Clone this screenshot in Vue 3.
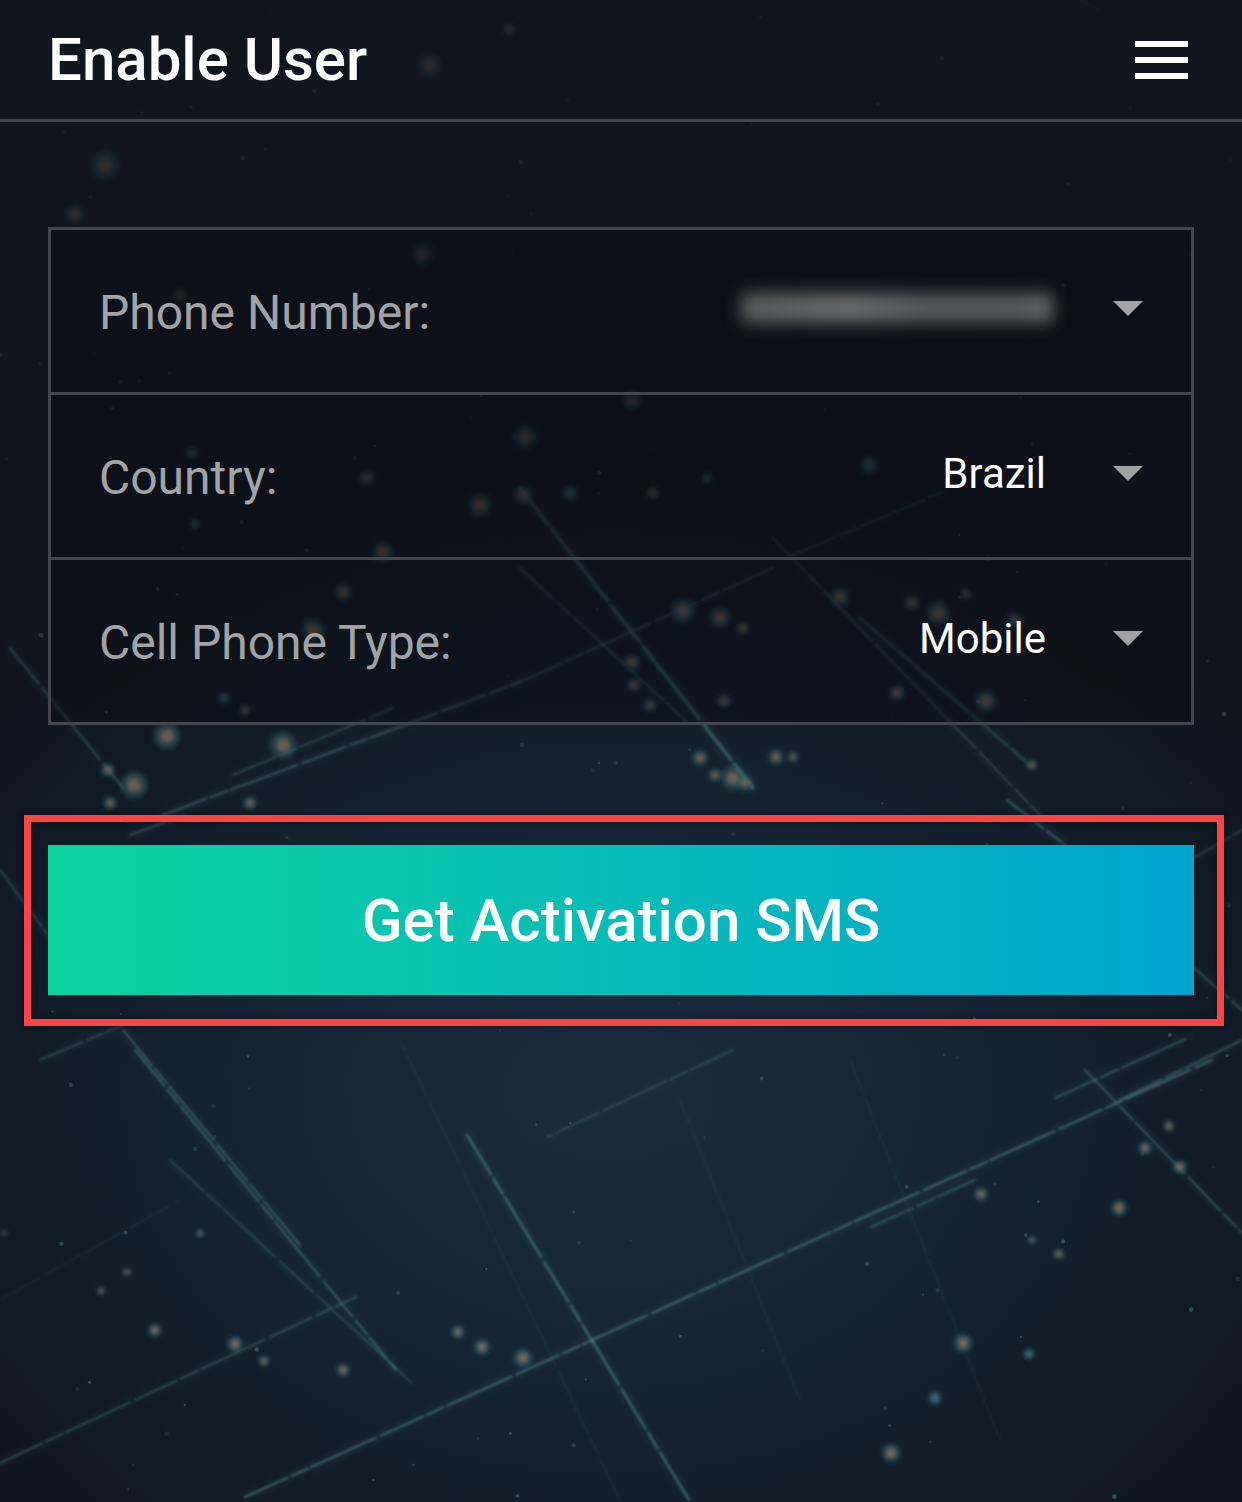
<script setup>
// rows of the form, the first value is blurred out in the screenshot
const rows = [
  { label: 'Phone Number:', value: '', hidden: true },
  { label: 'Country:', value: 'Brazil' },
  { label: 'Cell Phone Type:', value: 'Mobile' }
];

// background streaks: x1, y1, x2, y2, width, opacity
const streaks = [
  [520, 488, 753, 788, 3.5, 0.55],
  [520, 568, 687, 722, 2, 0.4],
  [520, 682, 773, 568, 2, 0.4],
  [793, 555, 943, 492, 2, 0.35],
  [773, 538, 1040, 815, 2, 0.4],
  [860, 618, 1030, 765, 3, 0.35],
  [1007, 800, 1065, 845, 2.5, 0.5],
  [10, 648, 123, 788, 2, 0.45],
  [123, 1030, 300, 1245, 2, 0.45],
  [163, 815, 520, 682, 2.5, 0.45],
  [233, 775, 393, 708, 2, 0.4],
  [40, 1060, 123, 1025, 2, 0.35],
  [130, 835, 185, 815, 2, 0.45],
  [0, 870, 48, 935, 2, 0.4],
  [245, 1497, 1212, 1060, 2.5, 0.5],
  [0, 1463, 356, 1297, 2, 0.4],
  [135, 1050, 396, 1370, 2, 0.5],
  [170, 1160, 412, 1383, 1.5, 0.4],
  [467, 1135, 689, 1500, 2.5, 0.55],
  [1085, 1070, 1242, 1233, 2, 0.45],
  [733, 1050, 547, 1137, 1.5, 0.4],
  [871, 1227, 975, 1180, 2.5, 0.35],
  [1055, 1098, 1190, 1037, 2, 0.45],
  [1120, 1100, 1242, 1040, 2, 0.45],
  [1194, 968, 1242, 1010, 2, 0.45],
  [1190, 860, 1242, 830, 2, 0.35],
  [620, 1500, 400, 1040, 1, 0.2],
  [800, 1400, 680, 1100, 1, 0.2],
  [1000, 1440, 850, 1060, 1, 0.18],
  [0, 1300, 180, 1200, 1, 0.2],
  [350, 140, 400, 160, 1, 0.15],
  [1100, 10, 1080, 0, 3, 0.2]
];

// glowing dots: x, y, r, warm
const dots = [
  [105, 165, 11, 1], [75, 214, 7, 1], [429, 65, 9, 1], [509, 29, 5, 1], [423, 254, 9, 1], [180, 295, 6, 1],
  [192, 453, 5, 0], [367, 478, 6, 1], [480, 505, 9, 1], [383, 552, 8, 1], [343, 592, 6, 1], [313, 630, 9, 1],
  [167, 736, 10, 1], [283, 745, 10, 1], [134, 785, 10, 1], [108, 770, 5, 1], [110, 803, 5, 1], [250, 803, 5, 1],
  [224, 698, 4, 0], [245, 710, 4, 1], [525, 437, 9, 1], [632, 400, 7, 1], [570, 493, 6, 0], [653, 493, 5, 1],
  [707, 478, 4, 0], [869, 465, 7, 0], [195, 524, 4, 0], [683, 611, 9, 1], [720, 617, 8, 1], [743, 628, 5, 1],
  [840, 597, 7, 1], [912, 603, 6, 1], [938, 613, 9, 1], [966, 594, 4, 1], [1015, 620, 6, 1], [986, 701, 8, 1],
  [897, 693, 6, 1], [776, 757, 6, 1], [793, 757, 4, 1], [724, 701, 5, 1], [733, 778, 9, 1], [1032, 765, 4, 1],
  [1145, 1148, 5, 1], [1180, 1167, 5, 1], [1119, 1208, 6, 1], [981, 1194, 5, 1], [155, 1330, 5, 1], [235, 1344, 6, 1],
  [264, 1361, 4, 1], [458, 1332, 5, 1], [482, 1347, 6, 1], [523, 1358, 7, 1], [343, 1370, 5, 1], [963, 1343, 7, 1],
  [891, 1453, 7, 1], [935, 1398, 5, 0], [1029, 1354, 4, 0], [1059, 1254, 4, 1], [1032, 1240, 3, 1], [127, 1272, 3, 1],
  [101, 1291, 3, 1], [200, 1233, 3, 1], [4, 1233, 2, 1], [1169, 1126, 4, 1],
  // warm beads along the strong streak
  [523, 495, 7, 1], [632, 662, 6, 1], [634, 685, 5, 1], [650, 705, 5, 1], [700, 758, 6, 1], [715, 775, 5, 1], [745, 783, 6, 1]
];

// tiny stars, same pattern on every render
const stars = [];
let seed = 17;
const next = () => {
  seed = (seed * 16807) % 2147483647;
  return seed / 2147483647;
};
for (let i = 0; i < 170; i++) {
  stars.push({ x: next() * 1242, y: next() * 1502, r: 0.8 + next() * 1.6, o: 0.15 + next() * 0.35 });
}
</script>

<template>
  <div class="page">
    <svg class="backdrop" viewBox="0 0 1242 1502" width="1242" height="1502">
      <defs>
        <filter id="soft" x="-30%" y="-30%" width="160%" height="160%">
          <feGaussianBlur stdDeviation="0.9" />
        </filter>
        <filter id="wide" x="-30%" y="-30%" width="160%" height="160%">
          <feGaussianBlur stdDeviation="3" />
        </filter>
        <filter id="glow" x="-100%" y="-100%" width="300%" height="300%">
          <feGaussianBlur stdDeviation="2.2" />
        </filter>
      </defs>
      <!-- halo under the streaks -->
      <g filter="url(#wide)" stroke="#4f8f98" stroke-linecap="round">
        <line
          v-for="(s, i) in streaks"
          :key="'h' + i"
          :x1="s[0]"
          :y1="s[1]"
          :x2="s[2]"
          :y2="s[3]"
          :stroke-width="s[4] * 2.2"
          :stroke-opacity="s[5] * 0.3"
        />
      </g>
      <g filter="url(#soft)" stroke="#6fa6a8" stroke-linecap="round" stroke-dasharray="46 5 18 4 70 6" opacity="0.82">
        <line
          v-for="(s, i) in streaks"
          :key="i"
          :x1="s[0]"
          :y1="s[1]"
          :x2="s[2]"
          :y2="s[3]"
          :stroke-width="s[4]"
          :stroke-opacity="s[5]"
        />
      </g>
      <circle v-for="(s, i) in stars" :key="'s' + i" :cx="s.x" :cy="s.y" :r="s.r" fill="#5f9aa3" :fill-opacity="s.o" />
      <g v-for="(d, i) in dots" :key="'d' + i">
        <circle :cx="d[0]" :cy="d[1]" :r="d[2] * 1.35" fill="#3f7f86" fill-opacity="0.45" filter="url(#glow)" />
        <circle :cx="d[0]" :cy="d[1]" :r="d[2] * 0.7" :fill="d[3] ? '#9a7a64' : '#4d8a96'" fill-opacity="0.8" filter="url(#glow)" />
      </g>
    </svg>
    <div class="shade"></div>

    <header class="top-bar">
      <h1 class="title">Enable User</h1>
      <div class="menu-icon">
        <span></span>
        <span></span>
        <span></span>
      </div>
    </header>

    <section class="form-table">
      <div v-for="row in rows" :key="row.label" class="form-row">
        <span class="row-label">{{ row.label }}</span>
        <span v-if="row.hidden" class="row-blur"></span>
        <span v-else class="row-value">{{ row.value }}</span>
        <span class="caret"></span>
      </div>
    </section>

    <div class="highlight">
      <button class="sms-btn">Get Activation SMS</button>
    </div>
  </div>
</template>

<style>
html,
body {
  margin: 0;
  background: #10151e;
}
</style>

<style scoped>
.page {
  position: relative;
  width: 1242px;
  height: 1502px;
  overflow: hidden;
  font-family: Roboto, "Liberation Sans", sans-serif;
  background: radial-gradient(ellipse 780px 620px at 610px 1090px, #1a2e40 0%, #152636 45%, #111b27 80%, #10161f 100%);
  background-color: #10151e;
}

.backdrop {
  position: absolute;
  top: 0;
  left: 0;
}

/* darkens the picture towards the top */
.shade {
  position: absolute;
  inset: 0;
  background: linear-gradient(180deg, rgba(16, 21, 30, 0.8) 0%, rgba(16, 21, 30, 0.68) 25%, rgba(16, 21, 30, 0.22) 50%, rgba(16, 21, 30, 0.08) 70%, rgba(16, 21, 30, 0.1) 100%);
}

.top-bar {
  position: relative;
  height: 119px;
  display: flex;
  align-items: center;
  justify-content: space-between;
  padding: 0 54px 0 48px;
  border-bottom: 3px solid #43474d;
}

.title {
  margin: 0;
  font-size: 60px;
  font-weight: 500;
  color: #fff;
}

.menu-icon {
  display: flex;
  flex-direction: column;
  gap: 10px;
}

.menu-icon span {
  display: block;
  width: 53px;
  height: 6px;
  background: #fff;
}

.form-table {
  position: relative;
  box-sizing: border-box;
  width: 1146px;
  margin: 105px 0 0 48px;
  border: 3px solid #43474d;
  border-bottom: none;
  background: rgba(8, 10, 14, 0.35);
}

.form-row {
  box-sizing: border-box;
  height: 165px;
  display: flex;
  align-items: center;
  padding: 0 48px 0 48px;
  border-bottom: 3px solid #43474d;
}

.row-label {
  flex: 1;
  margin-top: 2px;
  font-size: 48px;
  color: #a2a3a6;
}

.row-value {
  margin-right: -1px;
  margin-bottom: 6px;
  font-size: 42px;
  color: #fff;
}

.row-blur {
  width: 312px;
  height: 30px;
  margin: 0 -8px 6px 0;
  border-radius: 6px;
  background: linear-gradient(90deg, #5a5a5c, #69696b 35%, #54575a 62%, #545a5f 90%, #60666a);
  filter: blur(8px);
}

.caret {
  width: 0;
  height: 0;
  margin: 0 0 5px 68px;
  border-left: 15px solid transparent;
  border-right: 15px solid transparent;
  border-top: 15px solid #a2a2a4;
}

.highlight {
  position: relative;
  box-sizing: border-box;
  width: 1200px;
  height: 211px;
  margin: 90px 0 0 24px;
  padding: 23px 23px 24px 17px;
  border: 7px solid #fb4444;
  box-shadow: 0 0 6px rgba(0, 0, 0, 0.4), inset 0 0 6px rgba(0, 0, 0, 0.4);
}

.sms-btn {
  display: block;
  width: 100%;
  height: 150px;
  border: none;
  border-radius: 0;
  font-family: inherit;
  font-size: 60px;
  font-weight: 500;
  color: #fff;
  background: linear-gradient(90deg, #0cd3a0, #00a5cf);
  cursor: pointer;
}
</style>
